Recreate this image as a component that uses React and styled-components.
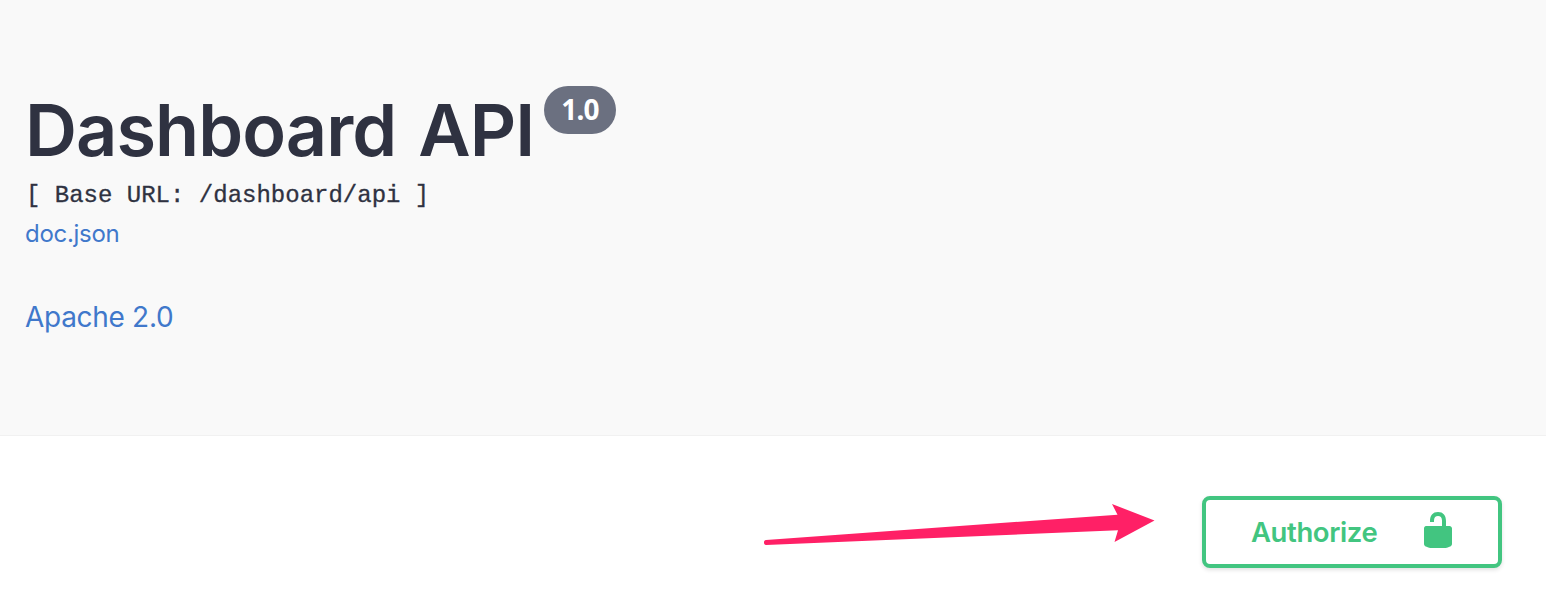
import React from "react";
import styled, { createGlobalStyle } from "styled-components";

const GlobalStyle = createGlobalStyle`
  * { box-sizing: border-box; }
  body {
    margin: 0;
    background: #fff;
    font-family: Inter, "Liberation Sans", sans-serif;
    color: #2f3241;
  }
`;

const Page = styled.main`
  position: relative;
  display: flex;
  flex-direction: column;
  height: 606px;
  overflow: hidden;
`;

const Info = styled.header`
  display: flex;
  flex-direction: column;
  align-items: flex-start;
  height: 436px;
  padding: 86px 25px 0;
  background: #f9f9f9;
  border-bottom: 1px solid #f1f1f1;
`;

const TitleRow = styled.div`
  display: flex;
  align-items: flex-start;
  height: 88px;
`;

const Title = styled.h1`
  margin: 0;
  width: 519px;
  font-size: 72px;
  font-weight: 600;
  line-height: 88px;
  letter-spacing: -0.95px;
  word-spacing: 5px;
  white-space: nowrap;
`;

const Version = styled.span`
  width: 72px;
  height: 48px;
  border-radius: 24px;
  background: #6b7080;
  color: #fff;
  font: 700 28px/47px "Noto Sans", sans-serif;
  letter-spacing: -0.8px;
  text-align: center;
`;

const BaseUrl = styled.pre`
  margin: 5px 0 0 1px;
  font: 400 24px/34px "Liberation Mono", monospace;
  -webkit-text-stroke: 0.3px currentColor;
`;

const Link = styled.a`
  margin-top: ${(p) => p.$gap}px;
  color: #4078cb;
  font-size: ${(p) => p.$size}px;
  line-height: 36px;
  letter-spacing: ${(p) => p.$spacing}px;
  text-decoration: none;
`;

const AuthBar = styled.section`
  display: flex;
  justify-content: flex-end;
  padding: 60px 44px 0 0;
`;

const AuthButton = styled.button`
  display: flex;
  align-items: flex-start;
  justify-content: space-between;
  width: 300px;
  height: 72px;
  padding: 10px 40px 0 45px;
  border: 4px solid #42c580;
  border-radius: 8px;
  background: #fff;
  box-shadow: 0 2px 4px rgba(0, 0, 0, 0.12);
  color: #42c580;
  font: 600 27.5px/45px Inter, "Liberation Sans", sans-serif;
  letter-spacing: -0.4px;
`;

const LockIcon = styled.svg`
  width: 40px;
  height: 40px;
  fill: currentColor;
`;

const Arrow = styled.svg`
  position: absolute;
  left: 760px;
  top: 500px;
  width: 400px;
  height: 50px;
  fill: #ff2066;
`;

export default function App() {
  return (
    <Page>
      <GlobalStyle />
      <Info>
        <TitleRow>
          <Title>Dashboard API</Title>
          <Version>1.0</Version>
        </TitleRow>
        <BaseUrl>[ Base URL: /dashboard/api ]</BaseUrl>
        <Link $gap={3} $size={24} $spacing={-0.3}>doc.json</Link>
        <Link $gap={47} $size={28} $spacing={-0.3}>Apache 2.0</Link>
      </Info>
      <AuthBar>
        <AuthButton>
          <span>Authorize</span>
          <LockIcon viewBox="0 0 20 20">
            <path d="M15.8 8H14V5.6C14 2.703 12.665 1 10 1 7.334 1 6 2.703 6 5.6V6h2v-.801C8 3.754 8.797 3 10 3c1.203 0 2 .754 2 2.199V8H4c-.553 0-1 .646-1 1.199V17c0 .549.428 1.139.951 1.307l1.197.387C5.672 18.861 6.55 19 7.1 19h5.8c.549 0 1.428-.139 1.951-.307l1.196-.387c.524-.167.953-.757.953-1.306V9.199C17 8.646 16.352 8 15.8 8z" />
          </LockIcon>
        </AuthButton>
      </AuthBar>
      <Arrow viewBox="0 0 400 50">
        <path d="M6 40L357.5 14.7L352 4L394.5 20.5L354.5 42L358 30.2L6 45C3.3 45 3.3 40 6 40Z" />
      </Arrow>
    </Page>
  );
}
